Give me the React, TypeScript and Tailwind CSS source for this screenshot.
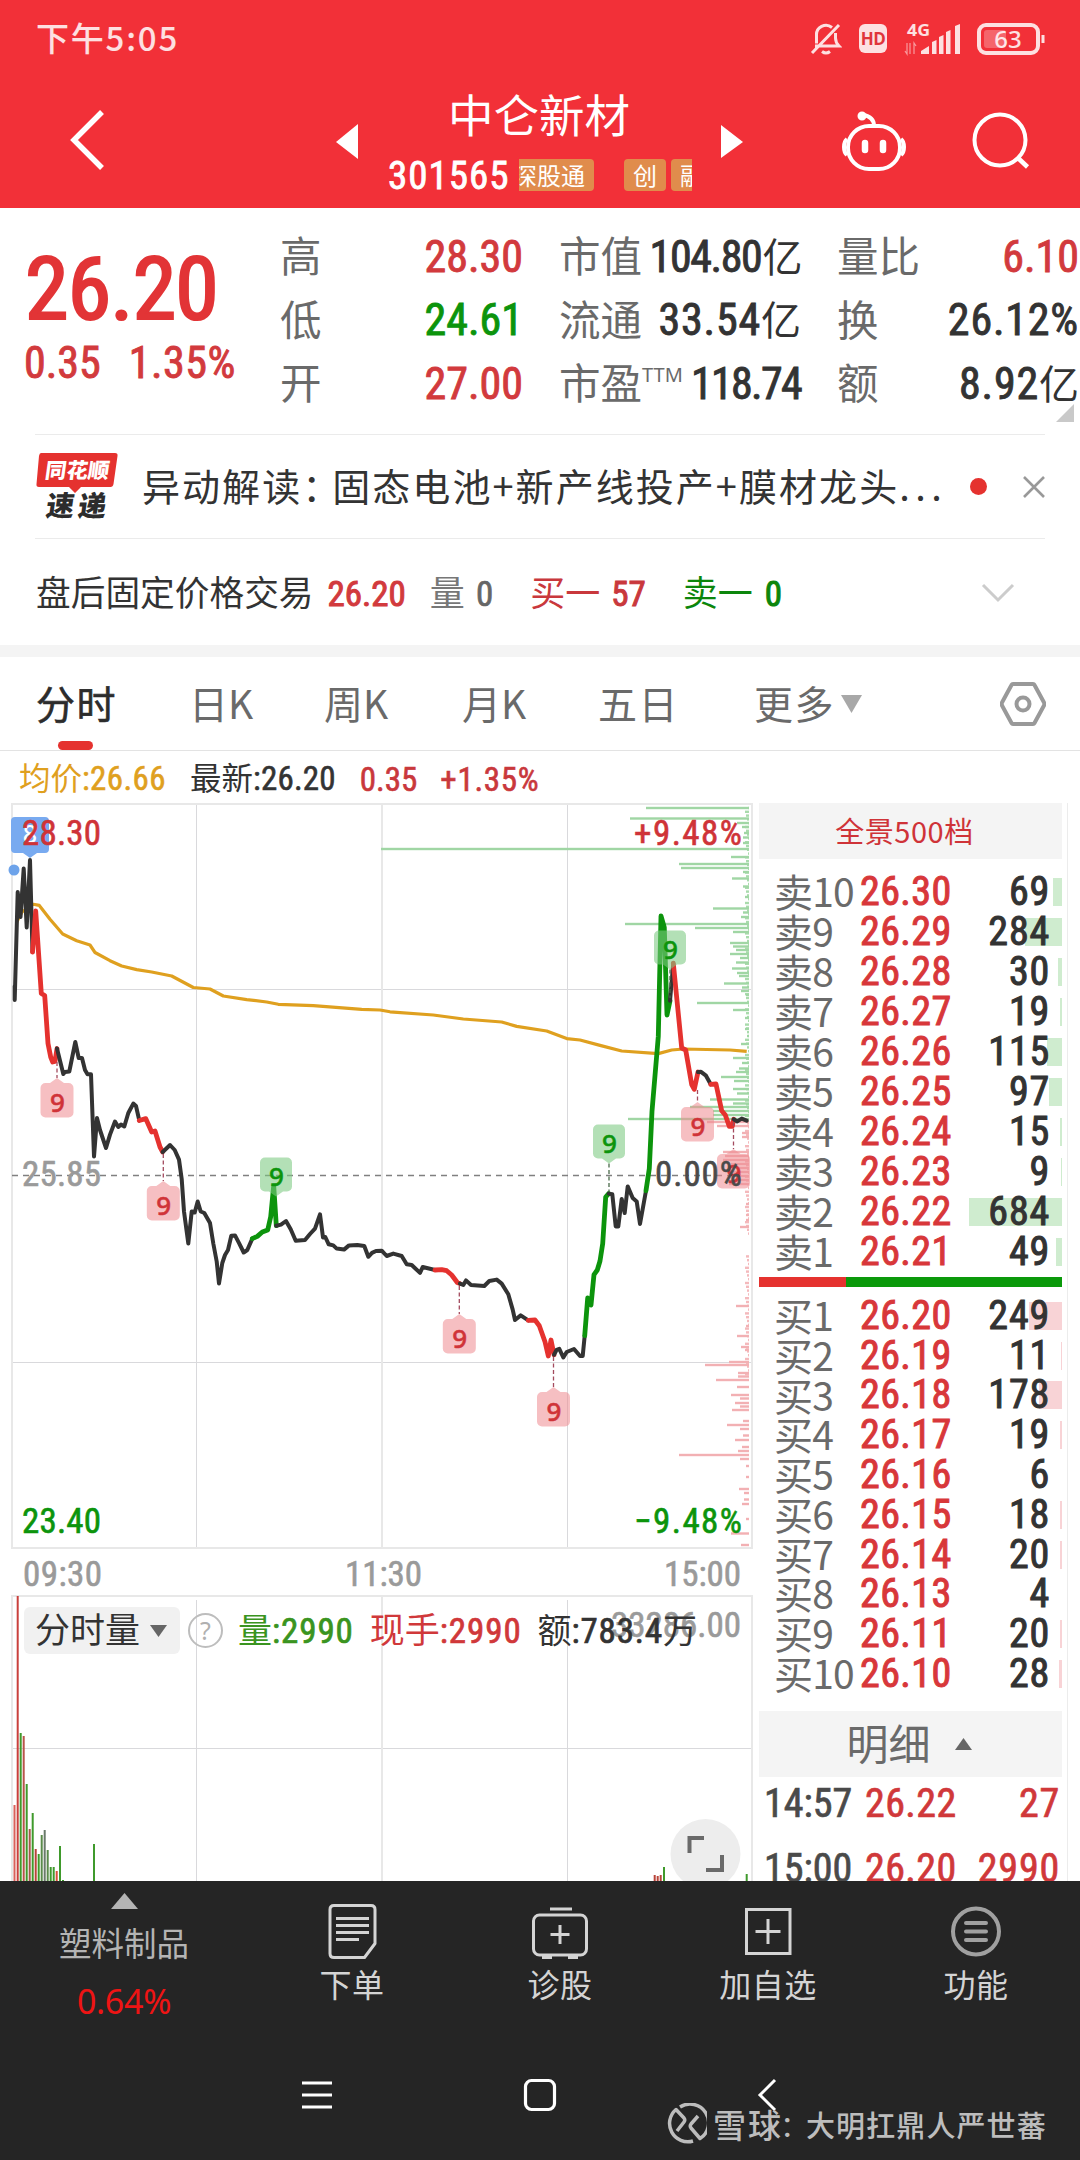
import type { ReactNode } from 'react'

const INK = '#333333'
const RED = '#e5322f'
const GREEN = '#0c940c'

type Level = [label: string, price: string, qty: number, bar: number]

const sells: Level[] = [
  ['卖10', '26.30', 69, 9],
  ['卖9', '26.29', 284, 37],
  ['卖8', '26.28', 30, 4],
  ['卖7', '26.27', 19, 2],
  ['卖6', '26.26', 115, 15],
  ['卖5', '26.25', 97, 13],
  ['卖4', '26.24', 15, 2],
  ['卖3', '26.23', 9, 1],
  ['卖2', '26.22', 684, 93],
  ['卖1', '26.21', 49, 6],
]

const buys: Level[] = [
  ['买1', '26.20', 249, 33],
  ['买2', '26.19', 11, 1],
  ['买3', '26.18', 178, 23],
  ['买4', '26.17', 19, 2],
  ['买5', '26.16', 6, 0],
  ['买6', '26.15', 18, 2],
  ['买7', '26.14', 20, 2],
  ['买8', '26.13', 4, 0],
  ['买9', '26.11', 20, 2],
  ['买10', '26.10', 28, 3],
]

// price line, split wherever its colour changes
const priceSegments: [color: string, points: string][] = [
  [INK, '14.7,986 14.7,1000 17.7,892 20.5,917 23.7,868.5 26.7,927.5 30,860 32.5,952'],
  [RED, '32.5,952 35.7,911 41.3,993.5 44.7,995.5 48,1043.5 50.7,1057 52.7,1062 55,1061.5 57,1048.5'],
  [INK, '57,1048.5 63.3,1074 65,1072 69.3,1071.5 75.3,1042 78.7,1058 82,1058 85,1070 87.5,1074.3 91,1074.3 94,1156.5 97,1118 100,1130 106,1148 110,1134.6 115,1121.5 118.3,1127 121,1124.6 124.3,1126.5 128.3,1113 133.3,1103.6 136,1106 139.3,1120.5'],
  [RED, '139.3,1120.5 145.7,1118.6 151.7,1132 155,1131 160,1147 162.7,1152'],
  [INK, '162.7,1152 170,1145 174.7,1150 179,1159.6 181.7,1179 184,1211.5 188.3,1243.5 191.7,1211.5 194.7,1212.5 197.7,1201.5 200.7,1211.5 204.3,1213 210,1223 213.3,1243.5 216.7,1261.5 219,1283.5 222.3,1263 225,1255 228,1250 231.3,1235.7 235,1235.4 239.3,1243.6 243.7,1252.5 247.3,1250 252.3,1238.6'],
  [GREEN, '252.3,1238.6 257.3,1236.4 262.3,1232 267.7,1230 270.7,1216.8 273.7,1185.7 276.3,1225.7'],
  [INK, '276.3,1225.7 281,1224.6 286,1221 290.7,1229.3 295.7,1240.7 305,1240 310,1234 315,1228.6 320,1214.3 323,1237.5 325.3,1237 328.7,1244.3 333.3,1245.4 336.7,1248.6 344,1249.6 349,1245.4 357.3,1245 364.3,1246 368.3,1256.8 372,1252.9 376,1251 381.7,1250.7 386.7,1256 393.3,1253.6 401.7,1256 406.7,1264.3 411.7,1265 420,1272.9 422.7,1267 435,1270'],
  [RED, '435,1270 441.7,1269.6 446.7,1270.7 451.7,1275 457.3,1282.5 460,1283.6'],
  [INK, '460,1283.6 463.3,1285 466,1280.4 471,1285 484.3,1286 489.3,1281 496.7,1279.6 501.7,1283.6 508.3,1294.3 512.7,1309.6 515,1320 520.7,1315.4 528.3,1320.4'],
  [RED, '528.3,1320.4 535,1320 539.3,1325.7 545,1341.8 548.3,1356 551,1340 554,1354.7'],
  [INK, '554,1354.7 556.7,1349.8 559.3,1348.8 563.3,1357.5 566.7,1352 574,1349 580,1356 582.7,1356 584.7,1335.7'],
  [GREEN, '584.7,1335.7 587.7,1298 591,1305 594,1274.6 597.3,1270 600,1261 602.7,1243.6 605.7,1197 608.7,1193.6'],
  [INK, '608.7,1193.6 612.3,1194.3 615.7,1226.4 618.3,1226.4 621.7,1199 624.7,1213 627.7,1186.4 632.7,1198 636.7,1201.4 640,1224 646,1190.7'],
  [GREEN, '646,1190.7 649.3,1168.6 652,1111.4 658.3,1036.4 661,916 664.3,927.5 667,1015 670,1000.7'],
  [INK, '670,1000.7 673.3,963.2'],
  [RED, '673.3,963.2 681.7,1048 685.7,1050 691.7,1084.6 694.3,1089.3 698,1072'],
  [INK, '698,1072 701,1071.8 706,1075.7 710.7,1084.3'],
  [RED, '710.7,1084.3 716,1084 721.7,1110.7 725.3,1115 729.3,1126.4 732.3,1126.4 733.7,1119.3'],
  [INK, '733.7,1119.3 737.3,1121.4 741.7,1118.6 746.7,1120.7'],
]

const averagePoints =
  '16.7,922 22,912 33.3,904.3 39.3,905.4 50,919.3 62.7,934 76.7,940.7 90,945 95,952.5 110,960.7 121.7,966 136.7,969.6 151.7,972 171.7,976 193.3,987.5 210,989 223.3,996 246.7,999.6 266.7,1002 278.3,1004.3 313.3,1005.7 361.7,1009.3 380,1010 390,1011.8 433.3,1015 463.3,1019 501.7,1022 516.7,1026.4 546.7,1031 566.7,1038.6 580,1040 600,1045.4 621.7,1051 658.3,1053.6 671.7,1050 683.3,1049 730,1050 746.7,1051.4'

// [y, length], drawn leftwards from the right edge
const askDepth: [number, number][] = [
  [808, 103], [818.5, 119], [823, 12], [827, 7], [833, 5], [837.5, 6], [843, 6], [849, 368], [857, 18],
  [864, 70], [868, 68], [872, 6], [878.5, 17], [886.5, 6], [897, 4], [908.5, 36], [912.5, 6], [917, 8],
  [924, 124], [928, 54], [932, 16], [943, 19], [946.5, 16], [950, 13], [954, 19], [958, 9], [962.5, 13],
  [968.5, 17], [973, 12], [976, 10], [983.5, 25], [987.5, 7], [991, 8], [995, 3], [1003, 52], [1010, 16],
  [1018, 4], [1029, 4], [1036, 2], [1044, 8], [1058, 16], [1063, 7], [1068.5, 10], [1072, 13], [1077, 28],
  [1081, 15], [1089, 16], [1093.5, 12], [1099.5, 39], [1103.5, 16], [1107, 59], [1111, 36], [1115, 36], [1119, 121],
]

const bidDepth: [number, number][] = [
  [1122, 42], [1126, 32], [1133, 7], [1137, 7], [1152, 26], [1156, 24], [1160, 26], [1164, 18], [1168, 12],
  [1172, 22], [1176, 19], [1180, 16], [1184, 20], [1204, 3], [1215, 3], [1220, 3], [1227, 9], [1306, 13],
  [1326, 3], [1336, 12], [1347, 8], [1350, 4], [1362, 20], [1365, 44], [1373, 11], [1376.5, 11], [1380, 33],
  [1387, 12], [1395, 18], [1398.5, 9], [1403, 14], [1406.5, 9], [1410, 17], [1421, 6], [1425, 22], [1429, 9],
  [1435.5, 6], [1440, 14], [1447, 7], [1451, 11], [1455, 70], [1459, 9], [1466, 3], [1477, 3], [1489, 10],
  [1493, 5], [1499.5, 5], [1504, 7], [1519, 3], [1533.5, 18], [1545, 8],
]

const shortTicks = Array.from({ length: 150 }, (_, i) => ({ y: 808 + i * 3.8, len: 1 + ((i * 7) % 4) })).filter(
  (t) => !(t.y > 1235 && t.y < 1255) && t.y < 1515,
)

const volumeBars: [x: number, top: number, color: string][] = [
  [14.5, 1805, '#d9605a'], [17.7, 1596, '#c9403c'], [20.7, 1733, '#3f9a2c'], [23.7, 1736, '#b9544a'],
  [26.7, 1784, '#3f9a2c'], [29.7, 1829, '#a8584a'], [32.7, 1813, '#3f9a2c'], [35.7, 1849, '#b9443a'],
  [38.7, 1854, '#3f9a2c'], [41.7, 1835, '#5a8a4a'], [44.7, 1830, '#6a7a6a'], [47.7, 1850, '#5a8a4a'],
  [50.7, 1867, '#3f9a2c'], [53.7, 1867, '#3f9a2c'], [56.7, 1871, '#d9503a'], [60, 1846, '#3f9a2c'],
  [63, 1880, '#3f9a2c'], [94, 1844, '#3f9a2c'], [654.7, 1875, '#b9443a'], [657.7, 1876, '#b9443a'],
  [660.7, 1875, '#b9443a'], [664, 1867, '#3f9a2c'], [746.7, 1874, '#3f9a2c'],
]

function BuyMarker({ x, y, from }: { x: number; y: number; from: number }) {
  return (
    <g>
      <line x1={x} y1={from} x2={x} y2={y - 5} stroke="#a34a5e" strokeWidth="1.3" strokeDasharray="4 2.5" />
      <path d={`M${x} ${y - 5}l7 5h4.5a5 5 0 0 1 5 5v24.5a5 5 0 0 1 -5 5h-23a5 5 0 0 1 -5 -5v-24.5a5 5 0 0 1 5 -5h4.5z`} fill="#ef8a90" fillOpacity="0.55" />
      <text x={x + 0.5} y={y + 28.5} textAnchor="middle" fill="#d03338" stroke="#d03338" strokeWidth="0.5" fontSize="26" fontWeight="500" className="font-['Noto_Sans']">9</text>
    </g>
  )
}

function SellMarker({ x, y, from }: { x: number; y: number; from?: number }) {
  return (
    <g>
      {from && <line x1={x} y1={y + 39} x2={x} y2={from} stroke="#4a6a4a" strokeWidth="1.3" strokeDasharray="4 2.5" />}
      <path d={`M${x} ${y + 39}l7 -5h4a5 5 0 0 0 5 -5v-24a5 5 0 0 0 -5 -5h-22a5 5 0 0 0 -5 5v24a5 5 0 0 0 5 5h4z`} fill="#7cc982" fillOpacity="0.58" />
      <text x={x + 0.5} y={y + 28.5} textAnchor="middle" fill="#0c940c" stroke="#0c940c" strokeWidth="0.5" fontSize="26" fontWeight="500" className="font-['Noto_Sans']">9</text>
    </g>
  )
}

function Depth({ y, len, color }: { y: number; len: number; color: string }) {
  return <rect x={749 - len} y={y - 1.2} width={len} height="2.4" fill={color} />
}

function Chart() {
  return (
    <svg width="756" height="1078" viewBox="0 803 756 1078" className="block">
      {/* grid */}
      <g fill="none" stroke="#d9d9dc" strokeWidth="1">
        <path d="M196.5 804V1548M567.5 804V1548M12 989.5H752M12 1362.5H752" />
        <path d="M196.5 1600V1881M567.5 1600V1881M12 1748.5H752" />
      </g>
      <g fill="none" stroke="#e8e8e8" strokeWidth="2">
        <path d="M382 804V1548M382 1597V1881" />
        <path d="M12 1881V1596H752V1881M12 804H752V1548H12Z" />
      </g>
      <path d="M12 1175.5H741" stroke="#808080" strokeWidth="1.6" strokeDasharray="6 5" />

      {/* order depth */}
      {shortTicks.map((t) => (
        <Depth key={t.y} y={t.y} len={t.len} color={t.y < 1121 ? '#a9dbac' : '#f4b9bc'} />
      ))}
      {askDepth.map(([y, len]) => (
        <Depth key={y} y={y} len={len} color="#a0d6a4" />
      ))}
      {bidDepth.map(([y, len]) => (
        <Depth key={y} y={y} len={len} color="#f2b0b3" />
      ))}

      {/* opening marker */}
      <path d="M15 817h30a4 4 0 0 1 4 4v28a4 4 0 0 1 -4 4h-8l-7 5l-7 -5h-8a4 4 0 0 1 -4 -4v-28a4 4 0 0 1 4 -4z" fill="#78aaf0" />
      <text x="30" y="843" textAnchor="middle" fill="#fff" fontSize="25" fontWeight="500" className="font-['Noto_Sans']">8</text>
      <circle cx="14" cy="870" r="5.5" fill="#6da3ea" />

      {/* price and average */}
      <polyline points={averagePoints} fill="none" stroke="#dfa01f" strokeWidth="3.2" strokeLinejoin="round" />
      {priceSegments.map(([color, points]) => (
        <polyline
          key={points}
          points={points}
          fill="none"
          stroke={color}
          strokeWidth={color === INK ? 4 : 4.8}
          strokeLinejoin="round"
          strokeLinecap="round"
        />
      ))}

      <BuyMarker x={57} y={1083} from={1062} />
      <BuyMarker x={163.3} y={1186} from={1154} />
      <BuyMarker x={459.3} y={1319} from={1286} />
      <BuyMarker x={553.5} y={1392} from={1357} />
      <BuyMarker x={697.5} y={1107} from={1090} />
      <BuyMarker x={733.5} y={1154} from={1122} />
      <SellMarker x={276} y={1157.5} />
      <SellMarker x={609} y={1124.5} from={1192} />
      <SellMarker x={670} y={930.5} from={998} />

      {/* axis labels */}
      <g fontSize="35" strokeWidth="0.6" className="font-['Roboto_Condensed']">
        <text x="22" y="845" fill="#cf3338" stroke="#cf3338" textLength="79">28.30</text>
        <text x="22" y="1185.5" fill="#9a9a9a" stroke="#9a9a9a" textLength="79">25.85</text>
        <text x="22" y="1533" fill="#0c940c" stroke="#0c940c" textLength="79">23.40</text>
        <text x="634" y="845" fill="#cf3338" stroke="#cf3338" textLength="108">+9.48%</text>
        <text x="655" y="1185.5" fill="#4a4a4a" stroke="#4a4a4a" textLength="87">0.00%</text>
        <text x="634" y="1533" fill="#0c940c" stroke="#0c940c" textLength="108">−9.48%</text>
        <g fill="#9a9a9a" stroke="#9a9a9a">
          <text x="23" y="1586" textLength="79">09:30</text>
          <text x="345" y="1586" textLength="77">11:30</text>
          <text x="664" y="1586" textLength="77">15:00</text>
          <text x="611" y="1637" textLength="130">33286.00</text>
        </g>
      </g>

      {/* volume */}
      {volumeBars.map(([x, top, color]) => (
        <rect key={x} x={x - 1} y={top} width="2" height={1881 - top} fill={color} />
      ))}

      {/* fullscreen button */}
      <circle cx="705.5" cy="1854" r="35" fill="#ededed" />
      <path d="M689.5 1853V1838H704M722 1855V1870H706" fill="none" stroke="#6a6a6a" strokeWidth="4" />
    </svg>
  )
}

function StatusBar() {
  return (
    <div className="flex h-[78px] items-center justify-between pr-[34px] pl-[36px] text-white/85">
      <span className="mt-[-3px] font-['Noto_Sans_CJK_SC'] text-[33px] leading-none font-medium tracking-[1.8px]">下午5:05</span>
      <div className="flex items-center">
        <svg width="32" height="34" viewBox="0 0 32 34" fill="none" stroke="currentColor" strokeWidth="3">
          <path d="M5 24h24c-3-3-3.5-5-3.5-8v-5M22 5.5a9.5 9.5 0 0 0-15.5 8v8M2 31L29 3M12 29.5q4 3 8 0" />
        </svg>
        <span className="mt-[-1px] ml-[17px] flex h-[29px] w-[28px] items-center justify-center rounded-[6px] bg-white/85 font-['Open_Sans'] text-[17px] font-bold tracking-tight text-[#e0343b]">
          HD
        </span>
        <svg width="60" height="34" viewBox="0 0 60 34" fill="currentColor" className="ml-[17px]">
          <text x="3" y="13.5" fontSize="16" fontWeight="700" textLength="23" lengthAdjust="spacingAndGlyphs" className="font-['Open_Sans']">4G</text>
          <path d="M17 32v-3l8-5v8zM28 32V20l4.5-2v14zM35 32V15l4.5-2v19zM42 32V10l4.5-2v24zM51 32V4l5-2v30z" />
          <path d="M3 21v11l-2-3M6 21v11M10 32v-11l2 3" fill="none" stroke="currentColor" strokeWidth="1.2" opacity="0.6" />
        </svg>
        <svg width="70" height="32" viewBox="0 0 70 32" fill="none" className="ml-[12px]">
          <rect x="3" y="2" width="59" height="28" rx="7" stroke="currentColor" strokeWidth="4" />
          <rect x="8" y="7" width="22" height="18" rx="3" fill="currentColor" opacity="0.3" />
          <path d="M67 12v8" stroke="currentColor" strokeWidth="3" />
          <text x="32" y="24.5" textAnchor="middle" fill="currentColor" fontSize="24" fontWeight="500" className="font-['Noto_Sans']">63</text>
        </svg>
      </div>
    </div>
  )
}

function TitleBar() {
  return (
    <div className="flex h-[130px] items-start text-white">
      <svg width="36" height="62" viewBox="0 0 36 62" fill="none" stroke="currentColor" strokeWidth="5.5" className="mt-[31px] ml-[69px]">
        <path d="M33 3L5 31l28 28" />
      </svg>
      <svg width="23" height="36" viewBox="0 0 23 36" fill="currentColor" className="mt-[46px] ml-[231px]">
        <path d="M0 18L22 0v35z" />
      </svg>
      <div className="ml-[29px] flex w-[304px] flex-col items-center">
        <h1 className="mt-[9px] mr-[2px] font-['Noto_Sans_CJK_SC'] text-[45.5px] leading-[52px] font-normal">中仑新材</h1>
        <div className="mt-[20px] flex h-[32px] w-full items-center overflow-hidden">
          <span className="w-[131px] shrink-0 pt-[2px] text-[39px] leading-none tracking-[1px] [-webkit-text-stroke:0.8px]">301565</span>
          <span className="flex h-[32px] w-[75px] shrink-0 justify-end overflow-hidden rounded-r-sm bg-[#e08c4c] pr-[9px] font-['Noto_Sans_CJK_SC'] text-[24px] leading-[31px] whitespace-nowrap">
            深股通
          </span>
          <span className="ml-[30px] h-[32px] w-[42px] shrink-0 rounded-sm bg-[#e08c4c] text-center font-['Noto_Sans_CJK_SC'] text-[24px] leading-[31px]">
            创
          </span>
          <span className="ml-[5px] h-[32px] w-[42px] shrink-0 rounded-sm bg-[#e08c4c] text-center font-['Noto_Sans_CJK_SC'] text-[24px] leading-[31px]">
            融
          </span>
        </div>
      </div>
      <svg width="23" height="34" viewBox="0 0 23 34" fill="currentColor" className="mt-[47px] ml-[29px]">
        <path d="M22 17L0 0v33z" />
      </svg>
      <svg width="66" height="62" viewBox="0 0 66 62" fill="none" stroke="currentColor" strokeWidth="4" className="mt-[32px] ml-[97px]">
        <rect x="7" y="16" width="52" height="43" rx="21" />
        <path d="M33 16c0-6-4-10-11-11" />
        <circle cx="21" cy="6" r="2.5" fill="currentColor" />
        <path d="M6 29c-4 3-4 13 0 16M60 29c4 3 4 13 0 16" strokeWidth="4" />
        <path d="M24 33v7M42 33v7" strokeWidth="6.5" strokeLinecap="round" />
      </svg>
      <svg width="60" height="60" viewBox="0 0 60 60" fill="none" stroke="currentColor" strokeWidth="4" className="mt-[34px] ml-[65px]">
        <circle cx="28" cy="28" r="25.5" />
        <path d="M46 46l9.5 9" strokeWidth="4.5" />
      </svg>
    </div>
  )
}

function Stat({ label, color, children }: { label: ReactNode; color: string; children: ReactNode }) {
  return (
    <div className="flex h-[63.5px] items-center justify-between whitespace-nowrap">
      <span className="pt-[2px] text-[41.5px] leading-none text-[#6a6a6a]">{label}</span>
      <span className={`text-[44px] leading-none [-webkit-text-stroke:0.9px] ${color}`}>{children}</span>
    </div>
  )
}

function Quote() {
  return (
    <section className="relative flex h-[226px] pt-[17px]">
      <div className="w-[280px] pl-[25px] text-[#e23436]">
        <div className="mt-[19px] text-[88px] leading-[90px] tracking-[-0.8px] [-webkit-text-stroke:2.2px]">26.20</div>
        <div className="mt-px ml-[-1px] flex gap-[28px] text-[44px] leading-[56px] text-[#d23a3d] [-webkit-text-stroke:0.9px]">
          <span>0.35</span>
          <span className="tracking-[0.5px]">1.35%</span>
        </div>
      </div>
      <div className="w-[243px]">
        <Stat label="高" color="text-[#d23a3d]">28.30</Stat>
        <Stat label="低" color="text-[#0c940c]">24.61</Stat>
        <Stat label="开" color="text-[#d23a3d]">27.00</Stat>
      </div>
      <div className="ml-[36px] w-[242px]">
        <Stat label="市值" color="tracking-[-1.4px] text-[#333]">
          104.80<span className="ml-px text-[40px] [-webkit-text-stroke:0]">亿</span>
        </Stat>
        <Stat label="流通" color="tracking-[0.8px] text-[#333]">
          33.54<span className="text-[40px] tracking-normal [-webkit-text-stroke:0]">亿</span>
        </Stat>
        <Stat
          label={
            <>
              市盈<sup className="relative top-[-17px] align-baseline font-['Noto_Sans'] text-[20px] leading-none">TTM</sup>
            </>
          }
          color="tracking-[-1.7px] text-[#333]"
        >
          118.74
        </Stat>
      </div>
      <div className="ml-[36px] w-[242px]">
        <Stat label="量比" color="text-[#d23a3d]">6.10</Stat>
        <Stat label="换" color="tracking-[0.8px] text-[#333]">26.12%</Stat>
        <Stat label="额" color="tracking-[0.8px] text-[#333]">
          8.92<span className="text-[40px] tracking-normal [-webkit-text-stroke:0]">亿</span>
        </Stat>
      </div>
      <svg width="18" height="18" viewBox="0 0 18 18" className="absolute right-[6px] bottom-[12px]">
        <path d="M18 0v18H0z" fill="#c9c9c9" />
      </svg>
    </section>
  )
}

function NewsRow() {
  return (
    <div className="mx-[35px] flex h-[105px] items-center border-y border-[#ebebeb]">
      <svg width="84" height="70" viewBox="0 0 84 70">
        <path d="M6 1h74q3 0 2.5 3l-4 28q-.5 3-3 3H46l-6 6-6-6H4q-3 0-2.5-3L4 4q.5-3 2-3z" fill="#e5322f" />
        <g transform="skewX(-8)" className="font-['Noto_Sans_CJK_SC']" fontWeight="900">
          <text x="13" y="26" fontSize="21" fill="#fff" textLength="64" lengthAdjust="spacingAndGlyphs">同花顺</text>
          <text x="19" y="64" fontSize="28" fill="#2c2c2c" textLength="60">速递</text>
        </g>
      </svg>
      <p className="mt-[-3px] ml-[23px] flex font-['Noto_Sans_CJK_SC'] text-[38px] leading-none tracking-[2.05px] whitespace-nowrap text-[#333]">
        异动解读<span className="-mr-[10px]">：</span>固态电池+新产线投产+膜材龙头<span className="tracking-[5.5px]">...</span>
      </p>
      <span className="ml-auto h-[17px] w-[17px] rounded-full bg-[#e5322f]" />
      <svg width="22" height="22" viewBox="0 0 22 22" stroke="#999" strokeWidth="2.6" className="ml-[36px]">
        <path d="M1 1l20 20M21 1L1 21" />
      </svg>
    </div>
  )
}

function AfterHours() {
  return (
    <div className="flex h-[106px] items-center pt-[5px] pr-[65px] pl-[36px] text-[35px] leading-none whitespace-nowrap">
      <span className="text-[34.7px] text-[#333]">盘后固定价格交易</span>
      <span className="ml-[14px] text-[#d23a3d] [-webkit-text-stroke:1px]">26.20</span>
      <span className="ml-[24px] text-[#777]">量</span>
      <span className="ml-[11px] text-[#666] [-webkit-text-stroke:0.7px]">0</span>
      <span className="ml-[37px] text-[#c9383c]">买一</span>
      <span className="ml-[11px] text-[#c9383c] [-webkit-text-stroke:1px]">57</span>
      <span className="ml-[37px] text-[#0c860c]">卖一</span>
      <span className="ml-[12px] text-[#0c860c] [-webkit-text-stroke:1px]">0</span>
      <svg width="34" height="20" viewBox="0 0 34 20" fill="none" stroke="#ccc" strokeWidth="3" className="mt-[-4px] ml-auto">
        <path d="M2 2l15 15L32 2" />
      </svg>
    </div>
  )
}

function Tabs() {
  return (
    <nav className="flex h-[94px] items-center border-b border-[#e3e3e3] pr-[34px] pl-[36px] font-['Noto_Sans_CJK_SC'] text-[39px] leading-none text-[#6a6a6a]">
      <span className="relative mt-[-3px] w-[153px] tracking-[1.5px] text-[#2c2c2c] [-webkit-text-stroke:0.6px]">
        分时
        <i className="absolute top-[58px] left-[22px] h-[9px] w-[35px] rounded-full bg-[#e5322f]" />
      </span>
      <span className="mt-[-3px] w-[135px]">日K</span>
      <span className="mt-[-3px] w-[138px]">周K</span>
      <span className="mt-[-3px] w-[136px]">月K</span>
      <span className="mt-[-3px] w-[156px] tracking-[1.5px]">五日</span>
      <span className="mt-[-3px] tracking-[1.5px]">更多</span>
      <svg width="22" height="18" viewBox="0 0 22 18" fill="#a8a8a8" className="ml-[6px]">
        <path d="M0 0h21L10.5 18z" />
      </svg>
      <svg width="46" height="44" viewBox="0 0 46 44" fill="none" stroke="#999" strokeWidth="4" strokeLinejoin="round" className="ml-auto">
        <path d="M13 2h20q1 0 1.5 1L44 20.5q.7 1.5 0 3L34.5 41q-.5 1-1.5 1H13q-1 0-1.5-1L2 23.5q-.7-1.5 0-3L11.5 3q.5-1 1.5-1z" />
        <circle cx="23" cy="22" r="6.5" />
      </svg>
    </nav>
  )
}

function Legend() {
  return (
    <div className="flex h-[52px] items-center pt-[4px] pl-[19px] text-[33px] leading-none whitespace-nowrap">
      <span className="text-[#dfa01f] [-webkit-text-stroke:0.6px]">
        <span className="text-[31.5px] [-webkit-text-stroke:0]">均价</span>
        <span className="tracking-[0.4px]">:26.66</span>
      </span>
      <span className="ml-[24px] text-[#333] [-webkit-text-stroke:0.6px]">
        <span className="text-[31.5px] [-webkit-text-stroke:0]">最新</span>
        <span className="tracking-[0.2px]">:26.20</span>
      </span>
      <span className="ml-[24px] text-[#c9383c] [-webkit-text-stroke:0.6px]">0.35</span>
      <span className="ml-[23px] tracking-[0.7px] text-[#c9383c] [-webkit-text-stroke:0.6px]">+1.35%</span>
    </div>
  )
}

function VolumeHeader() {
  return (
    <div className="absolute top-[804px] left-[24px] flex h-[47px] items-center text-[35px] leading-none whitespace-nowrap">
      <span className="flex h-[47px] w-[156px] items-center justify-center gap-[10px] rounded-md bg-[#f1f1f1] pr-[2px] text-[#333]">
        <span className="mt-[2px]">分时量</span>
        <svg width="17" height="12" viewBox="0 0 17 12" fill="#666">
          <path d="M0 0h17L8.5 12z" />
        </svg>
      </span>
      <span className="ml-[8px] flex h-[35px] w-[35px] items-center justify-center rounded-full border-[2.5px] border-[#bdbdbd] font-['Noto_Sans'] text-[25px] text-[#b0b0b0]">
        ?
      </span>
      <span className="mt-[2px] ml-[15px] text-[#3a9420]">
        <span className="text-[34px]">量</span>
        <span className="tracking-[0.9px] [-webkit-text-stroke:0.7px]">:2990</span>
      </span>
      <span className="mt-[2px] ml-[16px] text-[#d0383a]">
        现手<span className="tracking-[0.9px] [-webkit-text-stroke:0.7px]">:2990</span>
      </span>
      <span className="mt-[2px] ml-[16px] text-[#333]">
        <span className="text-[34px]">额</span>
        <span className="tracking-[0.8px] [-webkit-text-stroke:0.7px]">:783.4</span>
        <span className="text-[34px]">万</span>
      </span>
    </div>
  )
}

function BookRow({ level, tint }: { level: Level; tint: string }) {
  const [label, price, qty, bar] = level
  return (
    <div className="relative flex min-h-0 flex-1 items-center pl-[15px]">
      <i className={`absolute right-0 h-[28px] ${tint}`} style={{ width: bar }} />
      <span className="relative w-[86px] pb-[4px] font-['Noto_Sans_CJK_SC'] text-[39px] leading-[36px] tracking-[-0.8px] whitespace-nowrap text-[#6a6a6a]">{label}</span>
      <span className="relative text-[40px] leading-[36px] tracking-[0.4px] text-[#d8373a] [-webkit-text-stroke:1px]">{price}</span>
      <span className="relative ml-auto pr-[12px] text-[40px] leading-[36px] tracking-[0.8px] text-[#333] [-webkit-text-stroke:1px]">{qty}</span>
    </div>
  )
}

function Trade({ time, price, qty }: { time: string; price: string; qty: string }) {
  return (
    <div className="flex h-[65px] shrink-0 items-center pr-[2px] pl-[5px] text-[40px] leading-none [-webkit-text-stroke:0.7px]">
      <span className="w-[101px] text-[#4a4a4a]">{time}</span>
      <span className="tracking-[0.4px] text-[#d0383a]">{price}</span>
      <span className="ml-auto tracking-[0.8px] text-[#d0383a]">{qty}</span>
    </div>
  )
}

function OrderBook() {
  return (
    <aside className="ml-[3px] flex w-[309px] flex-col overflow-hidden border-r border-[#ececec] pr-[5px]">
      <div className="h-[56px] shrink-0 bg-[#f4f4f4] pr-[12px] text-center font-['Noto_Sans_CJK_SC'] text-[29px] leading-[55px] tracking-[0.5px] text-[#cf3338]">
        全景500档
      </div>
      <div className="mt-[13px] flex h-[400px] shrink-0 flex-col">
        {sells.map((level) => (
          <BookRow key={level[0]} level={level} tint="bg-[#cfeccf]" />
        ))}
      </div>
      <div className="mt-[5px] flex h-[10px] shrink-0 bg-[#0a990a]">
        <i className="w-[87px] bg-[#e5322f]" />
      </div>
      <div className="mt-[9px] flex h-[398px] shrink-0 flex-col">
        {buys.map((level) => (
          <BookRow key={level[0]} level={level} tint="bg-[#f8d3d6]" />
        ))}
      </div>
      <div className="mt-[17px] flex h-[66px] shrink-0 items-center justify-center gap-[24px] bg-[#f4f4f4] pr-[3px] text-[42px] leading-none text-[#6a6a6a]">
        <span className="mt-[3px]">明细</span>
        <svg width="17" height="12" viewBox="0 0 17 12" fill="#666">
          <path d="M0 12h17L8.5 0z" />
        </svg>
      </div>
      <div className="-mt-[6px]">
        <Trade time="14:57" price="26.22" qty="27" />
        <Trade time="15:00" price="26.20" qty="2990" />
      </div>
    </aside>
  )
}

function Action({ label, children }: { label: string; children: ReactNode }) {
  return (
    <div className="flex w-[208px] flex-col items-center pt-[21px] text-[#d4d4d4]">
      <svg width="60" height="60" viewBox="0 0 60 60" fill="none" stroke="currentColor" strokeWidth="3">
        {children}
      </svg>
      <span className="mt-[6px] text-[32px] leading-[36px] tracking-[0.5px]">{label}</span>
    </div>
  )
}

function BottomBar() {
  return (
    <footer className="relative h-[279px] bg-[#252525]">
      <div className="flex">
        <div className="flex w-[248px] flex-col items-center pt-[12px]">
          <svg width="27" height="16" viewBox="0 0 27 16" fill="#b4b4b4">
            <path d="M0 16h27L13.5 0z" />
          </svg>
          <span className="mt-[16px] text-[32.5px] leading-[40px] text-[#b4b4b4]">塑料制品</span>
          <span className="mt-[15px] font-['Noto_Sans'] text-[34px] leading-[42px] tracking-[-0.3px] text-[#ee1414]">0.64%</span>
        </div>
        <Action label="下单">
          <path d="M12 3.5h37q4 0 4 4v34L42.5 55.5H12q-4 0-4-4v-44q0-4 4-4z" strokeLinejoin="round" />
          <path d="M14 16.5h33M14 23.5h33M14 30.5h33M14 37.5h23" />
        </Action>
        <Action label="诊股">
          <rect x="3.5" y="13" width="53" height="40" rx="6" />
          <path d="M20 7h22M30 23v19M20.5 32.5h19M12 55.5h10M38 55.5h10" />
        </Action>
        <Action label="加自选">
          <rect x="8.5" y="7.5" width="43.5" height="44" />
          <path d="M30 17v25M17.5 29.5h25" />
        </Action>
        <Action label="功能">
          <g className="text-[#a0a0a0]" stroke="currentColor" strokeWidth="4">
            <circle cx="30" cy="29.5" r="23" />
            <path d="M20 21h20M20 29.5h20M20 38h20" strokeLinecap="round" />
          </g>
        </Action>
      </div>

      {/* system navigation */}
      <div className="mt-[56px] flex items-center text-white">
        <svg width="32" height="32" viewBox="0 0 32 32" stroke="currentColor" strokeWidth="3" className="ml-[301px]">
          <path d="M1 4h30M1 16h30M1 28h30" />
        </svg>
        <svg width="34" height="34" viewBox="0 0 34 34" fill="none" stroke="currentColor" strokeWidth="3.2" className="ml-[190px]">
          <rect x="2.5" y="2.5" width="29" height="29" rx="6" />
        </svg>
        <svg width="20" height="34" viewBox="0 0 20 34" fill="none" stroke="currentColor" strokeWidth="3" className="ml-[200px]">
          <path d="M18 2L3 17l15 15" />
        </svg>
      </div>

      {/* watermark */}
      <div className="absolute top-[222px] left-[667px] flex items-center text-[#bdbdbd]">
        <svg width="40" height="42" viewBox="0 0 40 42" fill="none" stroke="currentColor" strokeWidth="3.5" strokeLinejoin="round">
          <path d="M13 4A18.3 18.3 0 0 1 33 35.5L24 25Q22.5 23 24 21L31 13" />
          <path d="M26 38A18.3 18.3 0 0 1 9 6.5L17 15Q18.5 17 17 19L10 28" />
        </svg>
        <span className="ml-[6px] font-['Noto_Sans_CJK_SC'] text-[33px] leading-none font-medium tracking-[2px]">雪球</span>
        <span className="-ml-[3px] font-['Noto_Sans_CJK_SC'] text-[29px] leading-none">：</span>
        <span className="-ml-[3px] font-['Noto_Sans_CJK_SC'] text-[29px] leading-none font-medium tracking-[1.1px] whitespace-nowrap">大明扛鼎人严世蕃</span>
      </div>
    </footer>
  )
}

function App() {
  return (
    <div className="h-[2160px] w-[1080px] overflow-hidden bg-white font-['Roboto_Condensed','Noto_Sans_CJK_SC',sans-serif]">
      <header className="h-[208px] bg-[#f23038]">
        <StatusBar />
        <TitleBar />
      </header>
      <Quote />
      <NewsRow />
      <AfterHours />
      <div className="h-[12px] bg-[#f4f4f4]" />
      <Tabs />
      <Legend />
      <main className="flex h-[1078px] overflow-hidden">
        <div className="relative">
          <Chart />
          <VolumeHeader />
        </div>
        <OrderBook />
      </main>
      <BottomBar />
    </div>
  )
}

export default App
